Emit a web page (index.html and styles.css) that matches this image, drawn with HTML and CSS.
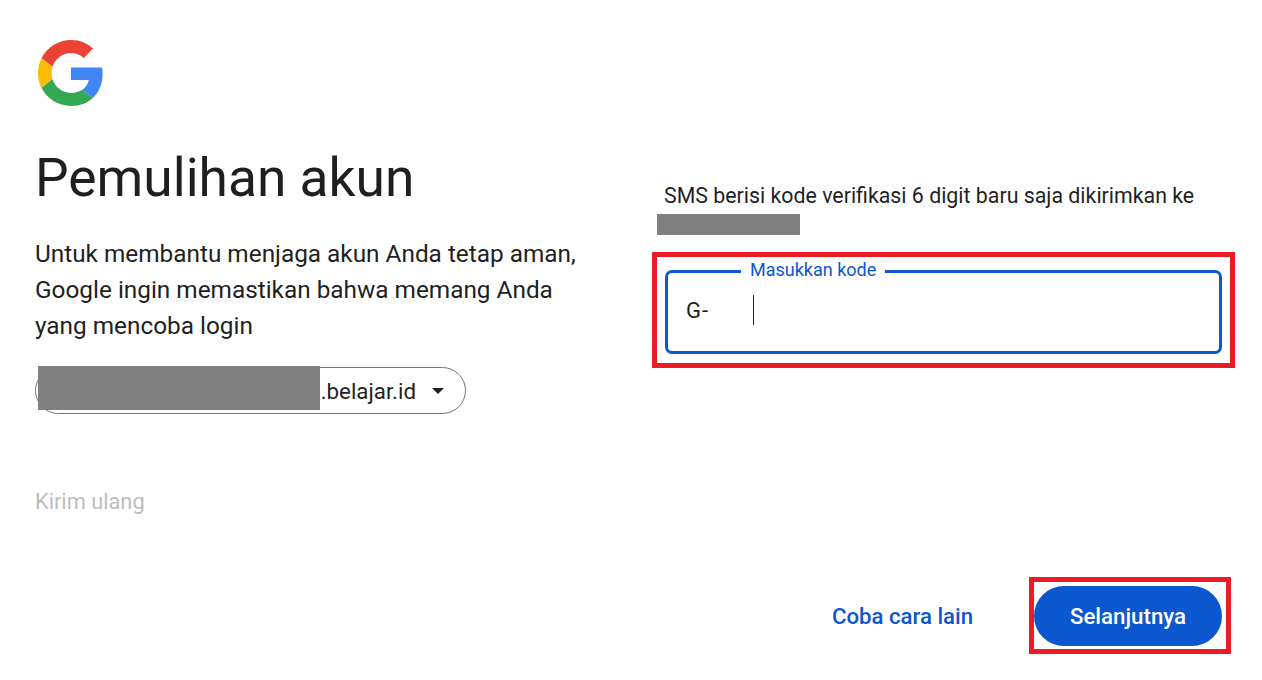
FILE: index.html
```html
<!DOCTYPE html>
<html lang="id">
<head>
<meta charset="utf-8">
<title>Pemulihan akun</title>
<link rel="stylesheet" href="styles.css">
</head>
<body>
<main class="page">
  <section class="left">
    <svg class="logo" viewBox="0 0 48 48" aria-label="Google">
      <path fill="#EA4335" d="M24 9.5c3.54 0 6.71 1.22 9.21 3.6l6.85-6.85C35.9 2.38 30.47 0 24 0 14.62 0 6.51 5.38 2.56 13.22l7.98 6.19C12.43 13.72 17.74 9.5 24 9.5z"/>
      <path fill="#4285F4" d="M46.98 24.55c0-1.57-.15-3.09-.38-4.55H24v9.02h12.94c-.58 2.96-2.26 5.48-4.78 7.18l7.73 6c4.51-4.18 7.09-10.36 7.09-17.65z"/>
      <path fill="#FBBC05" d="M10.53 28.59c-.48-1.45-.76-2.99-.76-4.59s.27-3.14.76-4.59l-7.98-6.19C.92 16.46 0 20.12 0 24c0 3.88.92 7.54 2.56 10.78l7.97-6.19z"/>
      <path fill="#34A853" d="M24 48c6.48 0 11.93-2.13 15.89-5.81l-7.73-6c-2.15 1.45-4.92 2.3-8.16 2.3-6.26 0-11.57-4.22-13.47-9.91l-7.98 6.19C6.51 42.62 14.62 48 24 48z"/>
    </svg>
    <h1 class="title">Pemulihan akun</h1>
    <p class="lead">Untuk membantu menjaga akun Anda tetap aman, Google ingin memastikan bahwa memang Anda yang mencoba login</p>
    <div class="account">
      <span class="mask mask-account"></span>
      <span class="account-text">.belajar.id</span>
      <svg class="arrow" viewBox="0 0 12 6"><path d="M0 0h12L6 6z"/></svg>
    </div>
    <div class="resend">Kirim ulang</div>
  </section>
  <section class="right">
    <p class="sms">SMS berisi kode verifikasi 6 digit baru saja dikirimkan ke</p>
    <div class="mask mask-phone"></div>
    <div class="mark mark-field">
      <div class="field">
        <span class="field-label">Masukkan kode</span>
        <span class="prefix">G-</span>
        <span class="caret"></span>
      </div>
    </div>
    <div class="actions">
      <a class="link">Coba cara lain</a>
      <div class="mark mark-button">
        <button class="next">Selanjutnya</button>
      </div>
    </div>
  </section>
</main>
</body>
</html>
```
FILE: styles.css
```css
* { box-sizing: border-box; }
html, body { margin: 0; height: 680px; overflow: hidden; background: #fff; }
body { font-family: Roboto, "Noto Sans", sans-serif; color: #1f1f1f; }
.page { display: grid; grid-template-columns: 652px 583px; height: 680px; }
.left { padding: 40px 0 0 36px; display: flex; flex-direction: column; align-items: flex-start; }
.logo { width: 66px; height: 66px; margin-left: 2px; display: block; }
.title { margin: 36px 0 0 -1px; font-size: 53.3px; line-height: 72px; font-weight: 400; }
.lead { margin: 22px 0 0 -1px; width: 548px; font-size: 24.35px; line-height: 36px; }
.account { position: relative; margin: 23px 0 0 -1px; width: 431px; height: 47px; border: 1px solid #747775; border-radius: 24px; display: flex; align-items: center; justify-content: flex-end; padding-right: 21px; }
.account-text { font-size: 22.3px; font-weight: 400; margin-right: 16px; }
.arrow { width: 12px; height: 6px; fill: #1f1f1f; }
.mask { background: #808080; }
.mask-account { position: absolute; left: 2px; top: -2px; width: 282px; height: 44px; }
.resend { margin: 74px 0 0 -1px; font-size: 21.8px; line-height: 28px; color: #bdbdbd; font-weight: 400; }
.right { display: flex; flex-direction: column; align-items: flex-start; padding-top: 182px; }
.sms { margin: 0 0 0 12px; font-size: 21.35px; line-height: 28px; }
.mask-phone { margin: 4px 0 0 5px; width: 143px; height: 21px; }
.mark { border: 5px solid #ed1c24; }
.mark-field { margin-top: 17px; width: 583px; height: 116px; padding: 13px 8px 9px; }
.field { position: relative; height: 84px; width: 557px; border: 3px solid #0b57d0; border-radius: 7px; display: flex; align-items: center; padding: 0 0 0 18px; }
.field-label { position: absolute; left: 73px; top: -15px; padding: 0 9px; background: #fff; color: #0b57d0; font-size: 18px; line-height: 24px; }
.prefix { font-size: 22px; line-height: 28px; width: 67px; margin-top: -3px; letter-spacing: 1px; }
.caret { width: 1px; height: 30px; background: #1f1f1f; margin-top: -4px; }
.actions { margin-top: 209px; width: 579px; display: flex; align-items: center; justify-content: flex-end; gap: 56px; }
.link { color: #0b57d0; font-size: 22.2px; font-weight: 500; line-height: 28px; }
.mark-button { width: 202px; height: 77px; padding: 4px 4px 3px 0; }
.next { display: block; width: 188px; height: 60px; border: 0; border-radius: 30px; background: #0b57d0; color: #fff; font: 500 22.3px Roboto, sans-serif; }
```
